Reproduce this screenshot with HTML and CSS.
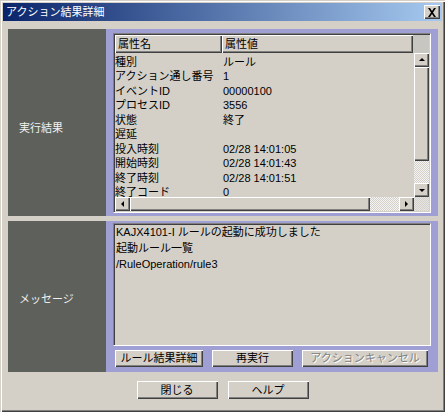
FILE: index.html
```html
<!DOCTYPE html>
<html lang="ja">
<head>
<meta charset="utf-8">
<link rel="stylesheet" href="styles.css">
</head>
<body>
<div class="window">
  <div class="titlebar">
    <span class="title">アクション結果詳細</span>
    <span class="close">
      <svg width="10" height="9" viewBox="0 0 10 9"><path d="M1 0h2l2 3 2-3h2L6 4.5 9 9H7L5 6 3 9H1l3-4.5z" fill="#000"/></svg>
    </span>
  </div>
  <div class="content">
    <div class="section top">
      <div class="label">実行結果</div>
      <div class="panel toppanel">
        <div class="listview">
          <div class="lv-header">
            <div class="hcell c1">属性名</div>
            <div class="hcell c2">属性値</div>
            <div class="hblank"></div>
          </div>
          <div class="lv-main">
            <div class="rows">
              <div class="row"><span class="c1">種別</span><span class="c2">ルール</span></div>
              <div class="row"><span class="c1">アクション通し番号</span><span class="c2">1</span></div>
              <div class="row"><span class="c1">イベントID</span><span class="c2">00000100</span></div>
              <div class="row"><span class="c1">プロセスID</span><span class="c2">3556</span></div>
              <div class="row"><span class="c1">状態</span><span class="c2">終了</span></div>
              <div class="row"><span class="c1">遅延</span><span class="c2"></span></div>
              <div class="row"><span class="c1">投入時刻</span><span class="c2">02/28 14:01:05</span></div>
              <div class="row"><span class="c1">開始時刻</span><span class="c2">02/28 14:01:43</span></div>
              <div class="row"><span class="c1">終了時刻</span><span class="c2">02/28 14:01:51</span></div>
              <div class="row last"><span class="c1">終了コード</span><span class="c2">0</span></div>
            </div>
            <div class="vscroll">
              <div class="sbtn"><i class="arr up"></i></div>
              <div class="vthumb"></div>
              <div class="track"></div>
              <div class="sbtn"><i class="arr down"></i></div>
            </div>
          </div>
          <div class="hscroll">
            <div class="sbtn"><i class="arr left"></i></div>
            <div class="hthumb"></div>
            <div class="track"></div>
            <div class="sbtn"><i class="arr right"></i></div>
            <div class="corner"></div>
          </div>
        </div>
      </div>
    </div>
    <div class="section bottom">
      <div class="label">メッセージ</div>
      <div class="panel msgpanel">
        <div class="textbox">
          <div class="line">KAJX4101-I ルールの起動に成功しました</div>
          <div class="line">起動ルール一覧</div>
          <div class="line">/RuleOperation/rule3</div>
        </div>
        <div class="btnrow">
          <button class="btn w88">ルール結果詳細</button>
          <button class="btn w81">再実行</button>
          <button class="btn w126" disabled>アクションキャンセル</button>
        </div>
      </div>
    </div>
    <div class="footer">
      <button class="btn w81 tall">閉じる</button>
      <button class="btn w81 tall">ヘルプ</button>
    </div>
  </div>
</div>
</body>
</html>
```

FILE: styles.css
```css
* { box-sizing: border-box; }
html, body { margin: 0; padding: 0; background: #d4d0c8; }
body {
  font-family: "Liberation Sans", "Noto Sans CJK JP", sans-serif;
  font-size: 11px;
  color: #000;
}
.window {
  width: 445px;
  height: 412px;
  padding: 3px;
  background: #d4d0c8;
  box-shadow: inset 1px 1px #d4d0c8, inset 2px 2px #fff, inset -1px -1px #404040, inset -2px -2px #808080;
}
.titlebar {
  height: 18px;
  display: flex;
  align-items: center;
  justify-content: space-between;
  padding: 0 2px 0 3px;
  background: linear-gradient(to right, #0a246a, #a6caf0);
}
.title {
  color: #fff;
  font-size: 11px;
  line-height: 18px;
}
.close {
  width: 16px;
  height: 14px;
  display: flex;
  align-items: center;
  justify-content: center;
  background: #d4d0c8;
  box-shadow: inset 1px 1px #fff, inset -1px -1px #404040, inset -2px -2px #808080;
}
.content {
  padding: 8px 4px 0 5px;
}
.section {
  display: flex;
}
.section.top { height: 187px; }
.section.bottom { height: 151px; margin-top: 5px; }
.label {
  width: 98px;
  background: #5e605b;
  color: #f0f0f0;
  display: flex;
  align-items: center;
  padding-left: 11px;
  padding-top: 8px;
}
.section.bottom .label { padding-top: 2px; }
.panel {
  flex: 1;
  background: #a09fd3;
  padding: 4px 7px;
}
.toppanel { padding-bottom: 3px; }
.listview {
  height: 180px;
  display: flex;
  flex-direction: column;
  background: #d4d0c8;
  border: 1px solid;
  border-color: #808080 #fff #fff #808080;
  box-shadow: inset 1px 1px #404040, inset -1px -1px #d4d0c8;
  padding: 1px;
}
.lv-header {
  display: flex;
  height: 18px;
  flex: none;
}
.hcell {
  height: 18px;
  line-height: 18px;
  padding-left: 3px;
  background: #d4d0c8;
  box-shadow: inset 1px 1px #fff, inset -1px -1px #404040, inset -2px -2px #808080;
}
.hcell.c1 { width: 107px; }
.hcell.c2 { width: 191px; }
.hblank { flex: 1; background: #c8c6c0; }
.lv-main {
  flex: 1;
  display: flex;
  min-height: 0;
}
.rows {
  flex: 1;
  overflow: hidden;
  padding-top: 1.5px;
}
.row {
  display: flex;
  height: 14.5px;
  line-height: 14.5px;
  white-space: nowrap;
}
.row.last { height: 13px; line-height: 14px; }
.row .c1 { width: 108px; flex: none; }
.row .c2 { flex: 1; }
.vscroll {
  width: 15px;
  display: flex;
  flex-direction: column;
}
.sbtn {
  width: 15px;
  height: 14px;
  flex: none;
  display: flex;
  align-items: center;
  justify-content: center;
  background: #d4d0c8;
  box-shadow: inset 1px 1px #fff, inset -1px -1px #404040, inset -2px -2px #808080;
}
.vthumb {
  height: 94px;
  flex: none;
  background: #d4d0c8;
  box-shadow: inset 1px 1px #fff, inset -1px -1px #404040, inset -2px -2px #808080;
}
.track {
  flex: 1;
  background: repeating-conic-gradient(#d4d0c8 0 25%, #f4f4f4 0 50%) 0 0 / 2px 2px;
}
.hscroll {
  display: flex;
  height: 14px;
  flex: none;
}
.hthumb {
  width: 240px;
  flex: none;
  background: #d4d0c8;
  box-shadow: inset 1px 1px #fff, inset -1px -1px #404040, inset -2px -2px #808080;
}
.corner {
  width: 15px;
  background: repeating-conic-gradient(#d4d0c8 0 25%, #e6e6e6 0 50%) 0 0 / 2px 2px;
}
.arr {
  width: 0;
  height: 0;
  border: 3px solid transparent;
  display: block;
}
.arr.up { border-bottom: 3px solid #000; border-top-width: 0; margin-top: -1px; }
.arr.down { border-top: 3px solid #000; border-bottom-width: 0; margin-top: 1px; }
.arr.left { border-right: 3px solid #000; border-left-width: 0; margin-left: -1px; }
.arr.right { border-left: 3px solid #000; border-right-width: 0; }
.msgpanel {
  padding: 2px 7px 0 7px;
  display: flex;
  flex-direction: column;
}
.textbox {
  height: 123px;
  flex: none;
  background: #d4d0c8;
  border: 1px solid;
  border-color: #808080 #fff #fff #808080;
  box-shadow: inset 1px 1px #404040, inset -1px -1px #d4d0c8;
  padding: 0 2px;
}
.line {
  height: 16px;
  line-height: 16px;
  white-space: nowrap;
}
.btnrow {
  display: flex;
  gap: 9px;
  margin-top: 4px;
  padding-left: 2px;
}
.btn {
  height: 17px;
  padding: 0;
  border: none;
  font-family: inherit;
  font-size: 11px;
  line-height: 17px;
  color: #000;
  background: #d4d0c8;
  box-shadow: inset 1px 1px #fff, inset -1px -1px #404040, inset -2px -2px #808080;
  white-space: nowrap;
}
.btn:disabled {
  color: #808080;
  text-shadow: 1px 1px #fff;
}
.btn.tall { height: 18px; line-height: 18px; }
.w81 { width: 81px; }
.w88 { width: 88px; }
.w126 { width: 126px; }
.footer {
  display: flex;
  justify-content: center;
  gap: 10px;
  padding-top: 9px;
  padding-right: 1px;
}
```
